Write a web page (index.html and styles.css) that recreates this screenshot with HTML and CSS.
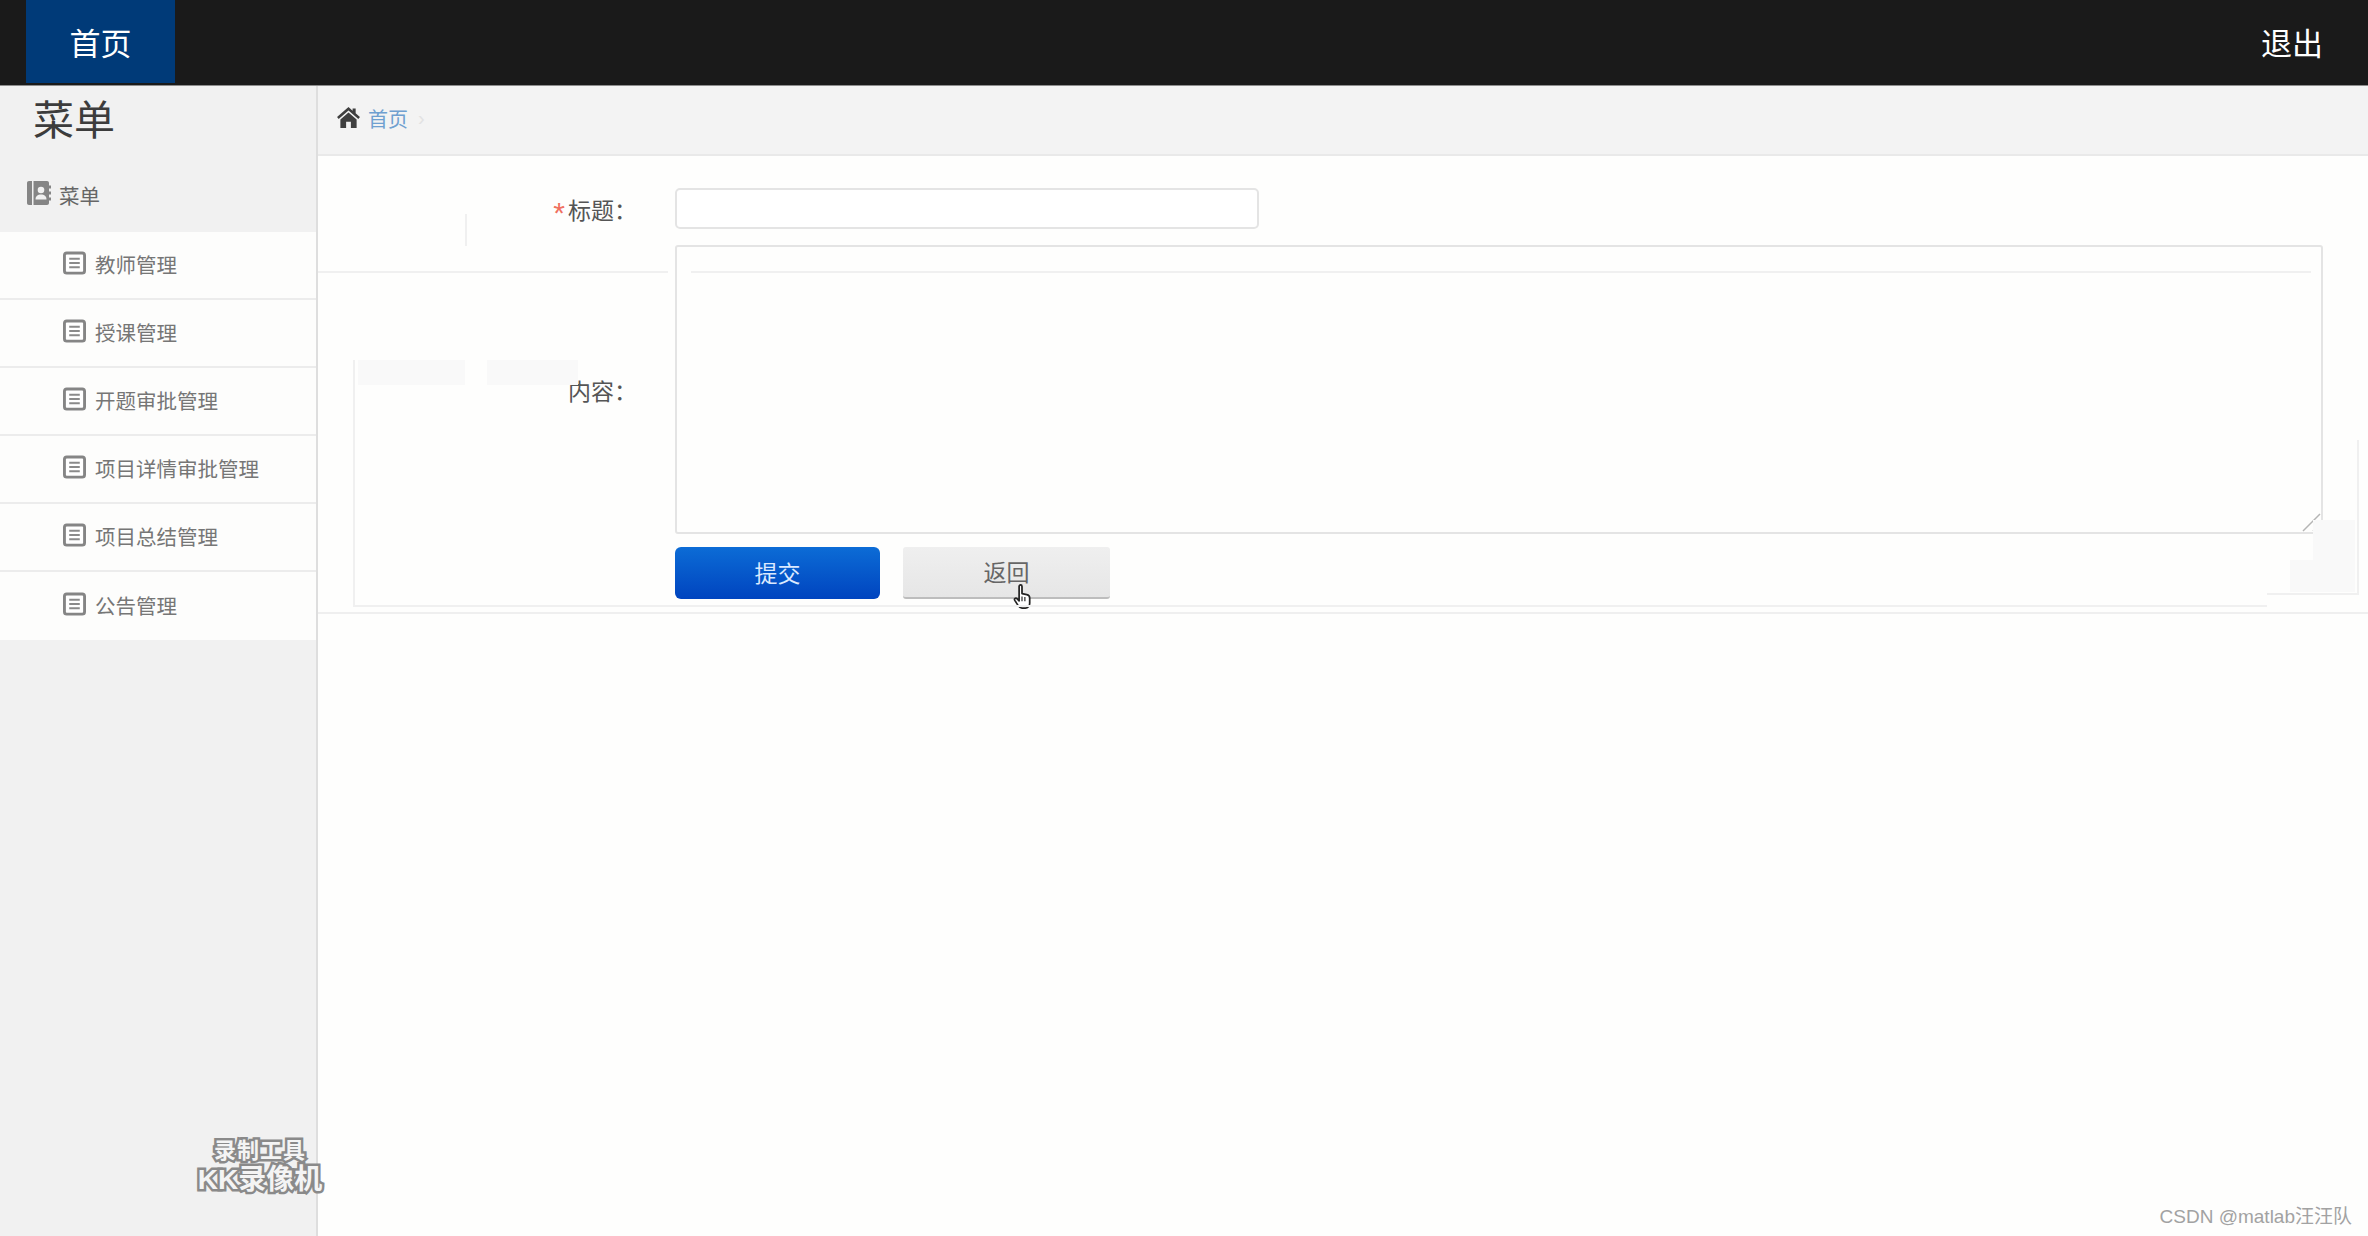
FILE: index.html
```html
<!DOCTYPE html>
<html lang="zh">
<head>
<meta charset="utf-8">
<title>首页</title>
<link rel="stylesheet" href="styles.css">
</head>
<body>
<header class="topbar">
  <a class="tab">首页</a>
  <a class="logout">退出</a>
</header>
<div class="main">
  <aside class="sidebar">
    <h1 class="side-title">菜单</h1>
    <div class="side-head">
      <svg class="head-icon" viewBox="0 0 24 24"><path fill="#858585" d="M0 2C0 .8.8 0 2 0h3v24H2c-1.200 0-2-.8-2-2zM6.500 0H20c1.200 0 2 .8 2 2v2.500h2v3h-2v3h2v3h-2v3h2v3h-2V22c0 1.200-.8 2-2 2H6.500z"/><circle cx="14" cy="9" r="3.300" fill="#f1f1f1"/><path fill="#f1f1f1" d="M8.500 18.500c0-3.400 2.200-5 5.500-5s5.500 1.600 5.500 5z"/></svg>
      <span>菜单</span>
    </div>
    <ul class="menu">
      <li class="menu-item"><svg class="doc"><use href="#doc"/></svg><span>教师管理</span></li>
      <li class="menu-item"><svg class="doc"><use href="#doc"/></svg><span>授课管理</span></li>
      <li class="menu-item"><svg class="doc"><use href="#doc"/></svg><span>开题审批管理</span></li>
      <li class="menu-item"><svg class="doc"><use href="#doc"/></svg><span>项目详情审批管理</span></li>
      <li class="menu-item"><svg class="doc"><use href="#doc"/></svg><span>项目总结管理</span></li>
      <li class="menu-item"><svg class="doc"><use href="#doc"/></svg><span>公告管理</span></li>
    </ul>
    <div class="recorder">
      <div class="rec-top">录制工具</div>
      <div class="rec-bottom">KK录像机</div>
    </div>
  </aside>
  <section class="content">
    <nav class="crumbs">
      <svg class="home" viewBox="0 0 24 22"><path fill="#3f3f3f" d="M12 0 0 10.500l1.700 2L12 3.600l10.300 8.900 1.700-2L19.500 6.600V1.500h-3.200v2.300z"/><path fill="#3f3f3f" d="M12 5.800 3.500 13v9h6v-6.500h5V22h6v-9z"/></svg>
      <a class="crumb-link">首页</a>
      <span class="crumb-sep">›</span>
    </nav>
    <form class="form">
      <label class="label label-title"><span class="star">*</span>标题：</label>
      <div class="input"></div>
      <label class="label label-body">内容：</label>
      <div class="textarea">
        <svg class="grip" viewBox="0 0 20 20"><path d="M2 19 19 2M12 19l7-7" stroke="#b5b5b5" stroke-width="1.500" fill="none"/></svg>
      </div>
      <span></span>
      <div class="actions">
        <button type="button" class="btn btn-primary">提交</button>
        <button type="button" class="btn btn-back">返回
          <svg class="cursor" viewBox="0 0 18 26"><path fill="#fff" stroke="#222" stroke-width="1.800" stroke-linejoin="round" d="M6 2.500c0-2 3-2 3 0V10l5 1c2 .4 3 1.500 3 3.500V20c0 3-2 5-4.500 5H9c-2 0-3-1-4-2.500L1.500 17c-1-1.800 1-3 2.300-1.800L6 17.500z"/><path stroke="#222" stroke-width="1.200" d="M9 13v5M12 13.500V18" fill="none"/></svg>
        </button>
      </div>
    </form>
    <div class="form-end"></div>
    <i class="ghost line-left"></i>
    <i class="ghost line-inner"></i>
    <i class="ghost line-bottom"></i>
    <i class="ghost edge-left"></i>
    <i class="ghost edge-stub"></i>
    <i class="ghost edge-right"></i>
    <i class="ghost line-right"></i>
    <i class="ghost patch patch-a"></i>
    <i class="ghost patch patch-b"></i>
    <i class="ghost patch patch-c"></i>
    <i class="ghost patch patch-d"></i>
  </section>
</div>
<div class="csdn">CSDN @matlab汪汪队</div>
<svg class="defs" width="0" height="0">
  <symbol id="doc" viewBox="0 0 24 24">
    <rect x="1.500" y="1.500" width="21" height="21" rx="2.500" fill="#fff" stroke="#858585" stroke-width="3"/>
    <path d="M6.500 7.500h11M6.500 12h11M6.500 16.500h11" stroke="#8a8a8a" stroke-width="2"/>
  </symbol>
</svg>
</body>
</html>
```

FILE: styles.css
```css
* { box-sizing: border-box; }
html, body { margin: 0; height: 100%; }
body {
  position: relative;
  display: flex;
  flex-direction: column;
  height: 1236px;
  overflow: hidden;
  background: #fefefd;
  font-family: "Liberation Sans", "Noto Sans CJK SC", sans-serif;
  color: #555;
}
.topbar {
  flex: 0 0 86px;
  display: flex;
  justify-content: space-between;
  align-items: stretch;
  padding: 0 45px 2px 26px;
  background: #1a1a1a;
  border-bottom: 1px solid #8d8d8d;
  color: #fff;
  font-size: 31px;
}
.tab {
  width: 149px;
  display: flex;
  align-items: center;
  justify-content: center;
  background: #003a78;
}
.logout { display: flex; align-items: center; }
.main { flex: 1; display: flex; min-height: 0; }
.sidebar {
  position: relative;
  flex: 0 0 318px;
  background: #f1f1f1;
  border-right: 2px solid #dedede;
}
.side-title {
  margin: 0;
  height: 72px;
  padding-left: 33px;
  font-size: 41px;
  line-height: 70px;
  font-weight: 400;
  color: #3c3c3c;
}
.side-head {
  display: flex;
  align-items: center;
  gap: 8px;
  height: 74px;
  padding: 0 0 0 27px;
  font-size: 20.500px;
  color: #666;
}
.head-icon { width: 24px; height: 24px; margin-top: -4px; }
.menu { list-style: none; margin: 0; padding: 0; }
.menu-item {
  display: flex;
  align-items: center;
  gap: 9px;
  height: 68px;
  padding-left: 63px;
  padding-bottom: 2px;
  background: #fdfdfc;
  border-bottom: 2px solid #ececec;
  font-size: 20.500px;
  color: #767676;
}
.menu-item:last-child { border-bottom: 0; }
.doc { width: 23px; height: 24px; margin-top: -3px; }
.recorder {
  position: absolute;
  left: 194px;
  top: 1054px;
  width: 132px;
  text-align: center;
  color: #f4f4f4;
  font-weight: 700;
  -webkit-text-stroke: 5px #8a8a8a;
  paint-order: stroke fill;
  line-height: 1;
}
.rec-top { font-size: 22px; letter-spacing: 1px; }
.rec-bottom { font-size: 28px; white-space: nowrap; margin-top: 4px; }
.content { position: relative; flex: 1; min-width: 0; }
.crumbs {
  display: flex;
  align-items: center;
  height: 70px;
  padding: 0 0 4px 19px;
  background: #f3f3f3;
  border-bottom: 2px solid #e9e9e9;
  font-size: 20px;
}
.home { width: 23px; height: 21px; margin: -2px 8px 0 0; }
.crumb-link { color: #6fa0d0; }
.crumb-sep { margin-left: 10px; color: #e2e2e2; }
.form {
  display: grid;
  grid-template-columns: 322px 1648px;
  grid-template-rows: 57px 302px 52px;
  width: 2004px;
  height: 418px;
  margin: 32px 0 0 35px;
}
.label {
  display: flex;
  align-items: center;
  justify-content: flex-end;
  margin-right: 38px;
  font-size: 23px;
  color: #555;
  white-space: nowrap;
}
.label-title { height: 41px; }
.label-body { height: 289px; }
.star { color: #f0705f; margin-right: 3px; font-size: 30px; line-height: 1; padding-top: 8px; }
.input {
  height: 41px;
  width: 584px;
  background: #fff;
  border: 2px solid #e4e4e4;
  border-radius: 5px;
}
.textarea {
  position: relative;
  height: 289px;
  background: #fefefd;
  border: 2px solid #e4e4e4;
  border-radius: 3px;
}
.grip { position: absolute; right: 0; bottom: 0; width: 20px; height: 20px; }
.actions { display: flex; gap: 23px; }
.btn {
  position: relative;
  width: 207px;
  height: 52px;
  padding: 0 0 2px;
  border: 0;
  border-radius: 6px;
  font-family: "Liberation Serif", "Noto Sans CJK SC", serif;
  font-size: 23px;
}
.btn-primary {
  width: 205px;
  background: linear-gradient(#0c6cd6, #0044bf);
  color: #dbe9ff;
}
.btn-back {
  background: linear-gradient(#efefef, #e6e6e6);
  border-bottom: 2px solid #bdbdbd;
  border-radius: 3px;
  color: #666;
}
.cursor {
  position: absolute;
  left: 110px;
  top: 37px;
  width: 18px;
  height: 25px;
}
.form-end { height: 2px; margin-top: 6px; background: #efefef; }
.ghost { position: absolute; display: block; pointer-events: none; background: #f0f0f0; }
.line-left { left: 0; width: 350px; top: 185px; height: 2px; }
.line-inner { left: 373px; width: 1620px; top: 185px; height: 2px; }
.line-bottom { left: 35px; width: 1914px; top: 519px; height: 2px; }
.edge-left { left: 35px; top: 274px; width: 2px; height: 245px; }
.edge-stub { left: 147px; top: 128px; width: 2px; height: 32px; }
.edge-right { left: 2039px; top: 354px; width: 2px; height: 153px; }
.line-right { left: 1949px; top: 507px; width: 92px; height: 2px; }
.patch { background: #f9f9f9; }
.patch-a { left: 40px; top: 274px; width: 107px; height: 25px; }
.patch-b { left: 169px; top: 274px; width: 91px; height: 25px; }
.patch-c { left: 1995px; top: 434px; width: 42px; height: 72px; }
.patch-d { left: 1972px; top: 474px; width: 23px; height: 32px; }
.csdn {
  position: absolute;
  right: 16px;
  bottom: 8px;
  font-size: 19px;
  color: #a2a2a2;
}
.defs { position: absolute; }
```
